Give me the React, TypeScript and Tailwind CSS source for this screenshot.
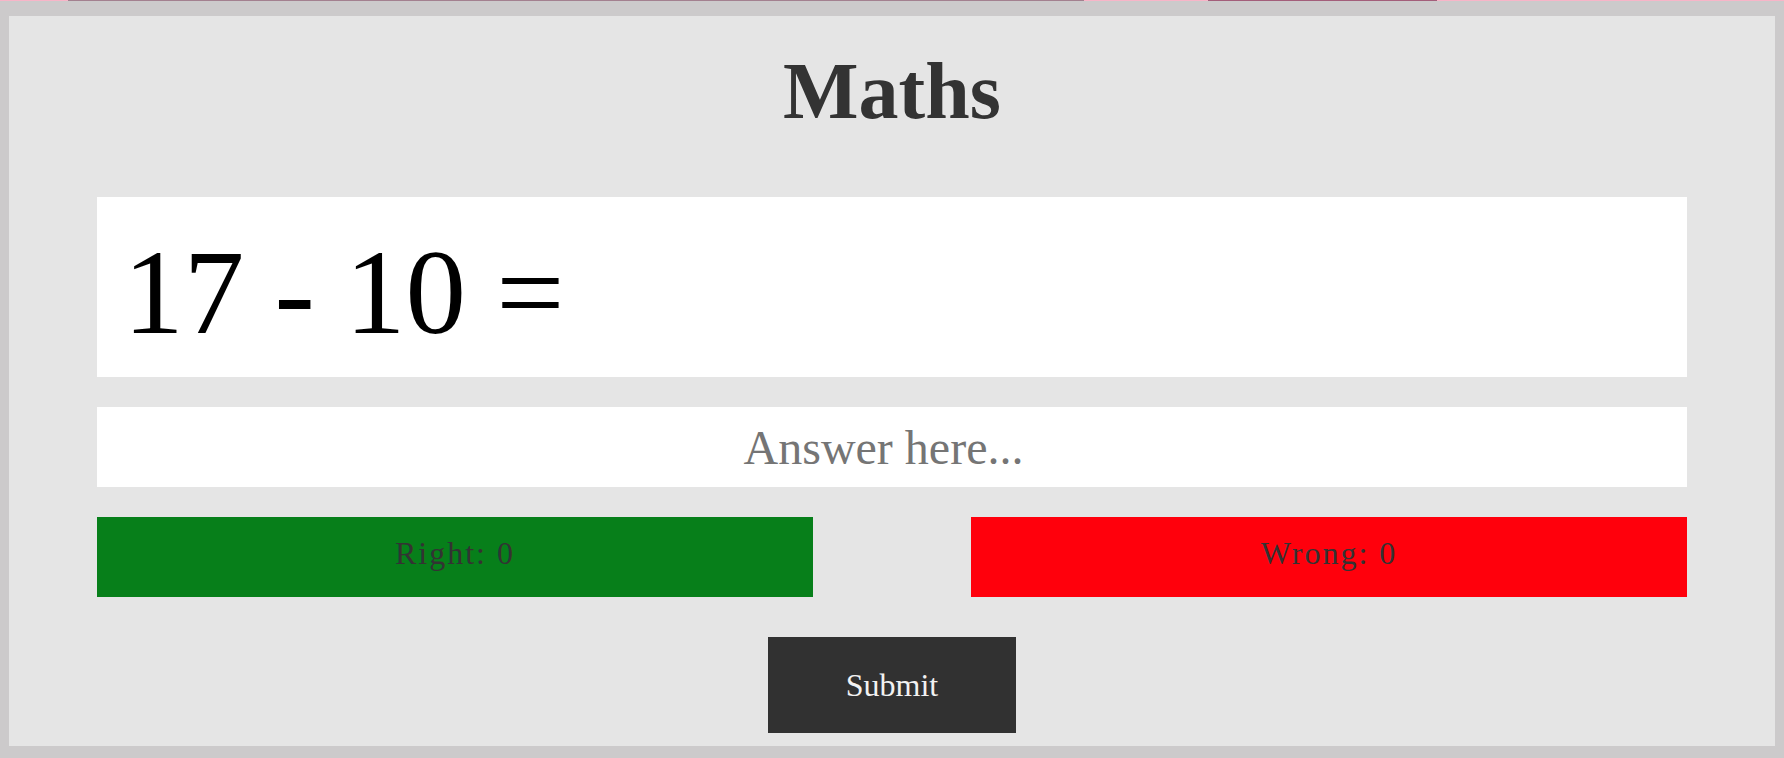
import React, { useState } from 'react';

const App = () => {
    const [answer, setAnswer] = useState<string>('');
    const right = 0;
    const wrong = 0;

    return (
        <div className="min-h-screen bg-[#cccacb] font-['Liberation_Serif','Times_New_Roman',serif]">
            <div className="flex h-px">
                <div className="w-[68px] bg-[#f8b5c8]"></div>
                <div className="w-[1016px] bg-[#a3808f]"></div>
                <div className="w-[124px] bg-[#f8b5c8]"></div>
                <div className="w-[229px] bg-[#a35e7a]"></div>
                <div className="flex-1 bg-[#f8b5c8]"></div>
            </div>
            <div className="px-[9px] pt-[15px] pb-[12px]">
                <div className="bg-[#e5e5e5] pt-[35px] pb-[13px]">
                    <h1 className="text-center text-[80px] leading-none font-bold text-[#333333]">Maths</h1>

                    <div className="w-[90%] mx-auto mt-[66px]">
                        <div className="bg-white h-[180px] pt-[35px] pl-[26px] text-[121px] leading-none text-black">
                            17 - 10 =
                        </div>

                        <input
                            type="text"
                            value={answer}
                            onChange={(e) => setAnswer(e.target.value)}
                            placeholder="Answer here..."
                            className="block w-full h-[80px] mt-[30px] pr-[17px] bg-white text-center text-[48px] text-black placeholder:text-[#757575] outline-none border-0"
                        />

                        <div className="flex justify-between mt-[30px]">
                            <div className="w-[45%] h-[80px] pt-[20px] bg-[#077f1a] text-center text-[32px] leading-none tracking-[2px] text-[#333333]">
                                Right: {right}
                            </div>
                            <div className="w-[45%] h-[80px] pt-[20px] bg-[#ff000c] text-center text-[32px] leading-none tracking-[2px] text-[#333333]">
                                Wrong: {wrong}
                            </div>
                        </div>
                    </div>

                    <div className="flex justify-center mt-[40px]">
                        <button className="w-[248px] h-[96px] bg-[#313131] text-[#f2f2f2] text-[32px] flex items-center justify-center">
                            Submit
                        </button>
                    </div>
                </div>
            </div>
        </div>
    );
};

export default App;
